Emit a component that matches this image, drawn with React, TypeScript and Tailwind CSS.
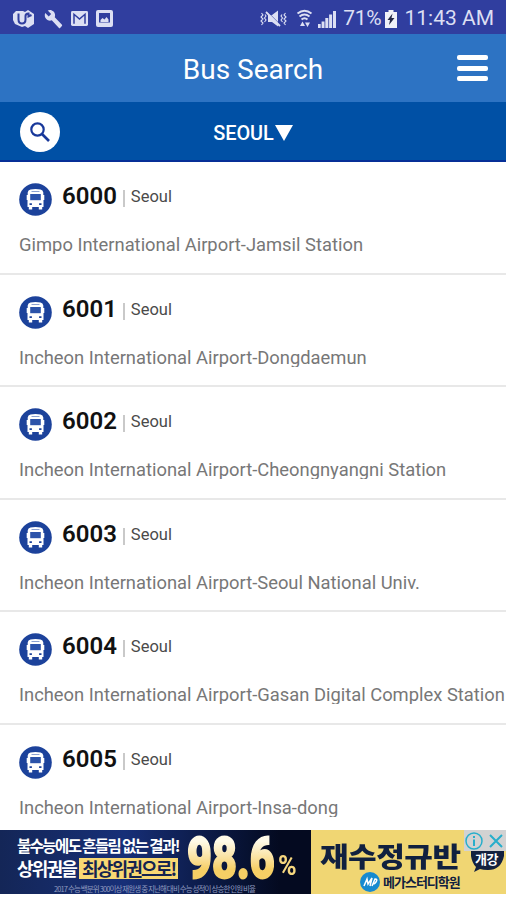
type BusRoute = {
  number: string;
  city: string;
  description: string;
};

const ROUTES: BusRoute[] = [
  { number: "6000", city: "Seoul", description: "Gimpo International Airport-Jamsil Station" },
  { number: "6001", city: "Seoul", description: "Incheon International Airport-Dongdaemun" },
  { number: "6002", city: "Seoul", description: "Incheon International Airport-Cheongnyangni Station" },
  { number: "6003", city: "Seoul", description: "Incheon International Airport-Seoul National Univ." },
  { number: "6004", city: "Seoul", description: "Incheon International Airport-Gasan Digital Complex Station" },
  { number: "6005", city: "Seoul", description: "Incheon International Airport-Insa-dong" },
];

function StatusBar() {
  return (
    <div className="flex h-[34px] shrink-0 items-center bg-[#303e9f] pt-[3px] pr-3 pl-[13px] text-[21px] leading-none text-[#dcdff3]">
      <svg className="h-[20px] w-[22px]" viewBox="0 0 22 20" aria-hidden>
        <path d="M3 2h7l2 1 3-2 6 4v10l-6 4-3-2-3 1-7-3-2-4V5z" fill="#dcdff3" />
        <path d="M5.500 4.500v6q0 4 3.500 4t3.500-4V7q0-2.500 3-2.500v3l3-1.500" fill="none" stroke="#303e9f" strokeWidth="2" />
      </svg>
      <svg className="ml-[9px] h-[20px] w-[19px]" viewBox="0 0 24 24" preserveAspectRatio="none" aria-hidden>
        <path
          d="M22.700 19l-9.100-9.100c.9-2.300.4-5-1.500-6.900-2-2-5-2.400-7.400-1.300L9 6 6 9 1.600 4.700C.4 7.100.9 10.100 2.900 12.100c1.900 1.900 4.600 2.400 6.900 1.500l9.100 9.100c.4.4 1 .4 1.400 0l2.300-2.300c.5-.4.5-1.100.1-1.400z"
          fill="#dcdff3"
        />
      </svg>
      <svg className="ml-[8px] h-[15px] w-[17px]" viewBox="0 0 17 16" preserveAspectRatio="none" aria-hidden>
        <rect width="17" height="16" rx="1.500" fill="#dcdff3" />
        <path d="M3 13.500V3.500l5.500 5 5.500-5v10" fill="none" stroke="#303e9f" strokeWidth="1.500" />
      </svg>
      <svg className="ml-[8px] h-[17px] w-[17px]" viewBox="0 0 17 17" aria-hidden>
        <rect width="17" height="17" rx="2" fill="#dcdff3" />
        <path d="M3 3h11v9.500H3z" fill="#303e9f" />
        <path d="M4.500 12v-2l2-2 2 1.500L10.500 7l2 2.500V12z" fill="#dcdff3" />
      </svg>

      <div className="ml-auto flex items-center">
        <svg className="h-[17px] w-[27px]" viewBox="0 0 27 17" fill="none" stroke="#dcdff3" aria-hidden>
          <path d="M8 5h4l6-4.500v16L12 12H8z" fill="#dcdff3" stroke="none" />
          <path d="M7 1.500l14 14" stroke="#303e9f" strokeWidth="1" />
          <path d="M6 2l14 14" strokeWidth="1.800" />
          <path d="M1.500 3l1.500 2-2 2 2 2-2 2 2 2-1.500 2M5 4.500l1 1.500-1.500 2L6 10l-1.500 2M22 4.500L21 6l1.500 2-1.500 2 1.500 2M25.500 3L24 5l2 2-2 2 2 2-2 2 1.500 2" strokeWidth="1.100" />
        </svg>
        <svg className="ml-[9px] h-[19px] w-[17px]" viewBox="0 0 17 19" fill="none" stroke="#dcdff3" aria-hidden>
          <path d="M1.500 4.500q7-5.500 14 0M3.500 7.500q5-4 10 0M5.500 10.500q3-2.500 6 0" strokeWidth="2" />
          <path d="M4 17l2.500-4.500L9 17zM9 13.500h5L11.500 18z" fill="#dcdff3" stroke="none" />
        </svg>
        <svg className="ml-[5px] h-[18px] w-[18px]" viewBox="0 0 18 18" fill="#dcdff3" aria-hidden>
          <path d="M0 14h2.700v4H0zM3.600 11.500h2.900V18H3.600zM7.300 8h3v10h-3zM11.100 4.500h3V18h-3zM15 1h3v17h-3z" />
        </svg>
        <span className="ml-[7px] tracking-[-0.300px]">71%</span>
        <svg className="ml-[4px] h-[18px] w-[12px]" viewBox="0 0 12 18" aria-hidden>
          <path d="M3.500 0h5v2H12v16H0V2h3.500z" fill="#f0f1f8" />
          <path d="M7.500 3.500L2.500 10H5l-1 5 5.500-7H6.500z" fill="#242846" />
        </svg>
        <span className="ml-[7px]">11:43 AM</span>
      </div>
    </div>
  );
}

function Header() {
  return (
    <header className="grid h-[68px] shrink-0 grid-cols-[1fr_auto_1fr] items-center bg-[#2d73c3] px-[18px] text-white">
      <h1 className="col-start-2 pt-[3px] text-[28px] leading-none">Bus Search</h1>
      <button type="button" aria-label="Menu" className="flex flex-col gap-[5.500px] justify-self-end">
        <span className="h-[5px] w-[31px] rounded-[2px] bg-white" />
        <span className="h-[5px] w-[31px] rounded-[2px] bg-white" />
        <span className="h-[5px] w-[31px] rounded-[2px] bg-white" />
      </button>
    </header>
  );
}

function CityBar() {
  return (
    <div className="grid h-[60px] shrink-0 grid-cols-[1fr_auto_1fr] items-center border-b-2 border-[#062f97] bg-[#0050a5] px-5 text-white">
      <button
        type="button"
        aria-label="Search"
        className="mt-0.5 flex h-[40px] w-[40px] items-center justify-center rounded-full bg-white"
      >
        <svg className="h-[20px] w-[20px]" viewBox="0 0 20 20" fill="none" stroke="#18389a" aria-hidden>
          <circle cx="7.500" cy="7.500" r="6.200" strokeWidth="2.200" />
          <path d="M12 12l7 7" strokeWidth="2.600" />
        </svg>
      </button>
      <button type="button" className="mt-[4px] flex items-center gap-px text-[19.900px] leading-none font-medium">
        <span className="pt-px">SEOUL</span>
        <svg className="h-[16px] w-[18px]" viewBox="0 0 18 16" fill="white" aria-hidden>
          <path d="M0 0h18L9 16z" />
        </svg>
      </button>
    </div>
  );
}

function BusIcon() {
  return (
    <svg className="h-[33px] w-[33px] shrink-0" viewBox="0 0 33 33" aria-hidden>
      <circle cx="16.500" cy="16.500" r="16.300" fill="#1c429b" />
      <path
        d="M11.500 6.500q5-1.200 10 0 2.500.6 2.800 3V12h1v5h-.8v7h-1.300v2.500h-3.400V24h-6.600v2.500H9.800V24H8.500v-7h-.8v-5h1V9.500q.3-2.400 2.800-3z"
        fill="#fff"
      />
      <path d="M12.500 8h8v.8h-8z" fill="#6f8ac6" />
      <path d="M11.200 11h10.600v6.200H11.200z" fill="#2c53aa" />
      <path d="M10.500 20.200h2.400v1.800h-2.400zM20.100 20.200h2.400v1.800h-2.400z" fill="#1c429b" />
    </svg>
  );
}

function RouteRow({ route }: { route: BusRoute }) {
  return (
    <li className="h-[112.500px] shrink-0 border-b-2 border-[#e8e8e8] pt-[20px] pl-[19px]">
      <div className="flex h-[34px] items-start">
        <div className="pt-px">
          <BusIcon />
        </div>
        <span className="ml-[10px] text-[24px] leading-[28px] font-semibold text-[#111]">{route.number}</span>
        <span className="mt-[8px] ml-[6px] h-[17px] w-[2px] bg-[#c9c9c9]" />
        <span className="ml-[6px] text-[16.500px] leading-[30px] text-[#4a4a4a]">{route.city}</span>
      </div>
      <p className="mt-[18px] h-[20px] overflow-hidden text-[18.380px] leading-[22px] whitespace-nowrap text-[#777]">
        {route.description}
      </p>
    </li>
  );
}

function AdBanner() {
  return (
    <aside className="flex h-[64px] shrink-0 overflow-hidden font-['Noto_Sans_CJK_KR',sans-serif] whitespace-nowrap">
      <div className="relative flex w-[311px] shrink-0 bg-linear-to-r from-[#142657] via-[#172f78] via-40% to-[#040a20] to-90% text-white">
        <div className="ml-[17px] flex w-[170px] flex-col">
          <span className="mt-[6px] text-[15.500px] leading-[19px] font-bold tracking-[-1.600px]">불수능에도 흔들림 없는 결과!</span>
          <div className="mt-[3px] flex items-center text-[18px] leading-[21px] font-bold tracking-[-1.800px]">
            <span>상위권을</span>
            <span className="ml-[3px] h-[21px] bg-[#f8d873] pr-[3px] pl-[3px] leading-[21px] text-[#14234f]">최상위권으로!</span>
          </div>
        </div>
        <div className="flex h-[51px] font-['Roboto',sans-serif]">
          <div className="w-[91px]">
            <span className="inline-block origin-left scale-x-[0.74] bg-linear-to-b from-[#fffbe8] from-20% to-[#f6cf65] to-70% bg-clip-text text-[58px] leading-[56px] font-black text-transparent [-webkit-text-stroke:2px_transparent]">
              98.6
            </span>
          </div>
          <span className="mt-[23px] text-[28px] leading-[26px] font-bold text-[#f6d77f]">
            <span className="inline-block origin-left scale-x-90">%</span>
          </span>
        </div>
        <span className="absolute top-[54px] left-[54px] text-[7.500px] leading-[9px] tracking-[-0.880px] text-[#8f9abf]">
          2017 수능 백분위 300이상 재원생 중 지난해 대비 수능 성적이 상승한 인원 비율
        </span>
      </div>
      <div className="relative flex-1 bg-[#f0d673] text-[#10203f]">
        <div className="mt-[12px] ml-[9px] h-[30px] origin-left scale-x-[1.150] text-[27px] leading-[27px] font-black tracking-[-0.400px]">
          재수정규반
        </div>
        <div className="ml-[49px] flex items-center">
          <svg className="h-[20px] w-[20px]" viewBox="0 0 20 20" aria-hidden>
            <circle cx="10" cy="10" r="10" fill="#168ad0" />
            <path d="M4 14L7 7l1 5 4-6-2 8M12 14l3-7q3 0 1 3t-3 1" fill="none" stroke="#fff" strokeWidth="1.500" />
          </svg>
          <span className="ml-[3px] text-[13px] leading-[20px] font-bold tracking-[-1px]">메가스터디학원</span>
        </div>
        <svg className="absolute top-[10px] right-0 h-[36px] w-[38px]" viewBox="0 0 38 36" fill="#13213f" aria-hidden>
          <path d="M3 10h33v6q-3 14-16 14-5 0-8-1l-6 3 2-5q-4-4-5-11z" />
        </svg>
        <div className="absolute top-[21px] right-[8px] text-[13px] leading-[15px] font-bold tracking-[-0.500px] text-white">개강</div>
        <div className="absolute top-0 right-0 flex h-[21px] w-[42px] items-center gap-[6px] bg-[#d2d2d2] pl-px">
          <svg className="h-[18px] w-[18px]" viewBox="0 0 18 18" fill="none" stroke="#27aecb" aria-hidden>
            <circle cx="9" cy="9" r="8" strokeWidth="1.500" />
            <path d="M9 4v2M9 7.500V14" strokeWidth="2" />
          </svg>
          <svg className="h-[14px] w-[14px]" viewBox="0 0 14 14" fill="none" stroke="#27aecb" aria-hidden>
            <path d="M1 1l12 12M13 1L1 13" strokeWidth="2" />
          </svg>
        </div>
      </div>
    </aside>
  );
}

export default function App() {
  return (
    <main className="flex h-[900px] w-[506px] flex-col overflow-hidden bg-white font-['Roboto',sans-serif]">
      <StatusBar />
      <Header />
      <CityBar />
      <ul className="flex h-[668px] shrink-0 flex-col overflow-hidden">
        {ROUTES.map((route) => (
          <RouteRow key={route.number} route={route} />
        ))}
      </ul>
      <AdBanner />
    </main>
  );
}
